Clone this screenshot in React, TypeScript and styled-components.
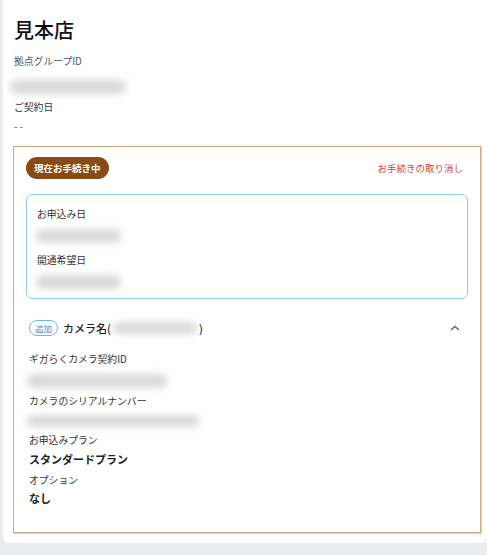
import styled, { createGlobalStyle } from "styled-components";

const GlobalStyle = createGlobalStyle`
  body {
    margin: 0;
    background: #e9edf0;
    font-family: "Noto Sans CJK JP", "Noto Sans", sans-serif;
    color: #222;
  }
`;

const Page = styled.div`
  padding: 0 0 12px 3px;
  overflow: hidden;
`;

const Card = styled.div`
  background: #fff;
  border-radius: 0 0 6px 6px;
  padding: 16px 6px 10px 10px;
`;

const Header = styled.div`
  display: flex;
  flex-direction: column;
  padding-left: 1px;
`;

const Title = styled.h1`
  margin: 0;
  font-size: 20px;
  line-height: 28px;
  font-weight: 500;
  color: #111;
`;

const Label = styled.div<{ $top?: number; $muted?: boolean }>`
  margin-top: ${(p) => p.$top ?? 0}px;
  font-size: 9.8px;
  line-height: 14px;
  color: ${(p) => (p.$muted ? "#555" : "#333")};
`;

const Value = styled.div<{ $top?: number }>`
  margin-top: ${(p) => p.$top ?? 0}px;
  font-size: 11px;
  line-height: 16px;
  font-weight: 700;
  color: #222;
`;

const Dash = styled.div`
  margin-top: 5px;
  font-size: 10px;
  line-height: 14px;
  letter-spacing: 2px;
  color: #555;
`;

const Blur = styled.div<{ $top?: number; $left?: number; $w: number; $h?: number }>`
  margin-top: ${(p) => p.$top ?? 0}px;
  margin-left: ${(p) => p.$left ?? 0}px;
  width: ${(p) => p.$w}px;
  height: ${(p) => p.$h ?? 14}px;
  background: #dadada;
  border-radius: 7px;
  filter: blur(3.5px);
  flex-shrink: 0;
`;

const Procedure = styled.section`
  margin-top: 13px;
  border: 1px solid #cfa67c;
  box-shadow: 1px 1px 0 #e9d5bf;
  padding: 10px 12px 26px 12px;
  display: flex;
  flex-direction: column;
`;

const TopRow = styled.div`
  display: flex;
  align-items: center;
  justify-content: space-between;
`;

const StatusBadge = styled.span`
  background: #8a4a14;
  color: #fff;
  font-size: 9.5px;
  font-weight: 700;
  line-height: 22px;
  padding: 0 8px;
  border-radius: 11px;
`;

const CancelLink = styled.a`
  color: #d1453b;
  font-size: 9.5px;
  margin-right: 5px;
  text-decoration: none;
`;

const DateBox = styled.div`
  margin-top: 15px;
  border: 1px solid #90cbf5;
  border-radius: 6px;
  padding: 12px 10px 9px 10px;
  display: flex;
  flex-direction: column;
`;

const Camera = styled.div`
  margin-top: 19px;
  padding-left: 3px;
  display: flex;
  flex-direction: column;
`;

const CameraHead = styled.div`
  display: flex;
  align-items: center;
  height: 20px;
`;

const AddTag = styled.span`
  border: 1px solid #6fb6ea;
  color: #3a8fd0;
  font-size: 8.5px;
  line-height: 14px;
  padding: 0 5px;
  border-radius: 8px;
`;

const CameraName = styled.span`
  margin-left: 5px;
  font-size: 11px;
  font-weight: 500;
  color: #222;
  display: flex;
  align-items: center;
  gap: 2px;
`;

const Chevron = styled.svg`
  margin-left: auto;
  margin-right: 8px;
`;

export default function App() {
  return (
    <>
      <GlobalStyle />
      <Page>
        <Card>
          <Header>
            <Title>見本店</Title>
            <Label $top={10} $muted>拠点グループID</Label>
            <Blur $top={12} $left={-4} $w={116} />
            <Label $top={6}>ご契約日</Label>
            <Dash>--</Dash>
          </Header>
          <Procedure>
            <TopRow>
              <StatusBadge>現在お手続き中</StatusBadge>
              <CancelLink href="#">お手続きの取り消し</CancelLink>
            </TopRow>
            <DateBox>
              <Label>お申込み日</Label>
              <Blur $top={8} $left={-1} $w={85} />
              <Label $top={10}>開通希望日</Label>
              <Blur $top={8} $left={-1} $w={85} />
            </DateBox>
            <Camera>
              <CameraHead>
                <AddTag>追加</AddTag>
                <CameraName>
                  カメラ名(
                  <Blur $w={84} $h={12} />
                  )
                </CameraName>
                <Chevron width="10" height="6" viewBox="0 0 10 6">
                  <path d="M1 5 L5 1.5 L9 5" fill="none" stroke="#666" strokeWidth="1.6" />
                </Chevron>
              </CameraHead>
              <Label $top={14}>ギガらくカメラ契約ID</Label>
              <Blur $top={8} $left={-2} $w={140} />
              <Label $top={6}>カメラのシリアルナンバー</Label>
              <Blur $top={7} $left={-2} $w={172} $h={12} />
              <Label $top={6}>お申込みプラン</Label>
              <Value $top={4}>スタンダードプラン</Value>
              <Label $top={6}>オプション</Label>
              <Value $top={3}>なし</Value>
            </Camera>
          </Procedure>
        </Card>
      </Page>
    </>
  );
}
